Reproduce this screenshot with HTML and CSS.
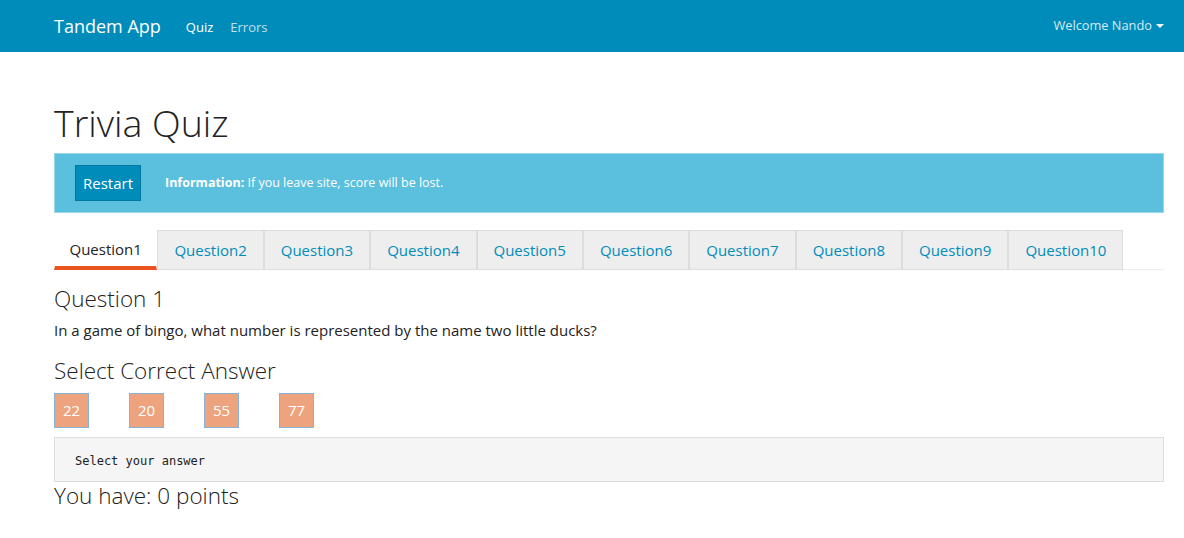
FILE: index.html
```html
<!DOCTYPE html>
<html lang="en">
<head>
<meta charset="utf-8">
<title>Tandem App</title>
<link rel="stylesheet" href="styles.css">
</head>
<body>
<nav class="navbar">
  <a class="brand" href="#">Tandem App</a>
  <ul class="nav-links">
    <li><a class="nav-link active" href="#">Quiz</a></li>
    <li><a class="nav-link" href="#">Errors</a></li>
  </ul>
  <div class="nav-right">
    <a class="nav-link user" href="#">Welcome Nando<span class="caret"></span></a>
  </div>
</nav>
<main class="main">
  <h1 class="title">Trivia Quiz</h1>
  <div class="alert">
    <button class="btn-restart">Restart</button>
    <span class="alert-text"><strong>Information:</strong> If you leave site, score will be lost.</span>
  </div>
  <ul class="tabs">
    <li><a class="tab active" href="#">Question1</a></li>
    <li><a class="tab" href="#">Question2</a></li>
    <li><a class="tab" href="#">Question3</a></li>
    <li><a class="tab" href="#">Question4</a></li>
    <li><a class="tab" href="#">Question5</a></li>
    <li><a class="tab" href="#">Question6</a></li>
    <li><a class="tab" href="#">Question7</a></li>
    <li><a class="tab" href="#">Question8</a></li>
    <li><a class="tab" href="#">Question9</a></li>
    <li><a class="tab" href="#">Question10</a></li>
  </ul>
  <section class="tab-pane">
    <h4 class="q-title">Question 1</h4>
    <p class="q-text">In a game of bingo, what number is represented by the name two little ducks?</p>
    <h4 class="q-sub">Select Correct Answer</h4>
    <div class="answers">
      <button class="answer">22</button>
      <button class="answer">20</button>
      <button class="answer">55</button>
      <button class="answer">77</button>
    </div>
    <pre class="result">Select your answer</pre>
    <h4 class="score">You have: 0 points</h4>
  </section>
</main>
</body>
</html>
```

FILE: styles.css
```css
* { box-sizing: border-box; }

body {
  margin: 0;
  font-family: "Open Sans", "Liberation Sans", sans-serif;
  font-size: 15px;
  line-height: 1.5;
  color: #222;
  background: #fff;
}

a { text-decoration: none; }

.navbar {
  height: 52px;
  background: #008cba;
  display: flex;
  align-items: center;
  padding: 0 20px 0 54px;
}

.brand {
  color: #fff;
  font-size: 18px;
  line-height: 1;
  margin-right: 25px;
}

.nav-links {
  display: flex;
  list-style: none;
  margin: 0;
  padding: 0;
  gap: 17px;
}

.nav-link {
  font-size: 13px;
  color: rgba(255, 255, 255, 0.75);
}

.nav-link.active { color: #fff; }

.nav-right { margin-left: auto; }

.nav-link.user { color: rgba(255, 255, 255, 0.85); display: flex; align-items: center; font-size: 12.8px; }

.caret {
  display: inline-block;
  margin-left: 4px;
  border-top: 4px solid #fff;
  border-left: 4px solid transparent;
  border-right: 4px solid transparent;
}

.main {
  padding: 0 20px 0 54px;
}

.title {
  margin: 47.5px 0 8.5px;
  font-size: 37.5px;
  font-weight: 300;
  line-height: 1.2;
}

.alert {
  display: flex;
  align-items: center;
  background: #5bc0de;
  border: 1px solid #9ad6ea;
  padding: 11px 20px;
  margin-bottom: 17px;
}

.btn-restart {
  font-family: inherit;
  font-size: 15px;
  color: #fff;
  background: #008cba;
  border: 1px solid #0079a1;
  height: 36px;
  padding: 0 7px;
  margin-right: 24px;
}

.alert-text {
  color: #fff;
  font-size: 12.5px;
}

.tabs {
  display: flex;
  list-style: none;
  margin: 0;
  padding: 0;
  border-bottom: 1px solid #eee;
}

.tab {
  display: block;
  height: 40px;
  line-height: 38px;
  padding: 0 16px;
  margin-bottom: -1px;
  background: #eee;
  border: 1px solid #ddd;
  color: #008cba;
  font-size: 15px;
}

.tab.active {
  background: #fff;
  color: #222;
  border-color: transparent;
  border-bottom: 4px solid #e95420;
  line-height: 36px;
  padding: 0 14.5px;
}

.tab-pane { padding: 0; }

.q-title, .q-sub, .score {
  font-size: 22.5px;
  font-weight: 300;
  line-height: 1.2;
}

.q-title { margin: 15px 0 7px; }

.q-text { margin: 0 0 15px; }

.q-sub { margin: 0 0 9px; }

.answers {
  display: flex;
  gap: 40px;
}

.answer {
  width: 35px;
  height: 35px;
  padding: 0;
  font-family: inherit;
  font-size: 15px;
  color: #fff;
  background: #eda47e;
  border: 1px solid #85b2d9;
}

.result {
  margin: 9px 0 0;
  height: 45px;
  padding: 4px 20px 0;
  display: flex;
  align-items: center;
  background: #f5f5f5;
  border: 1px solid #ddd;
  font-family: "DejaVu Sans Mono", "Liberation Mono", monospace;
  font-size: 12px;
  color: #222;
}

.score { margin: 0; }
```
